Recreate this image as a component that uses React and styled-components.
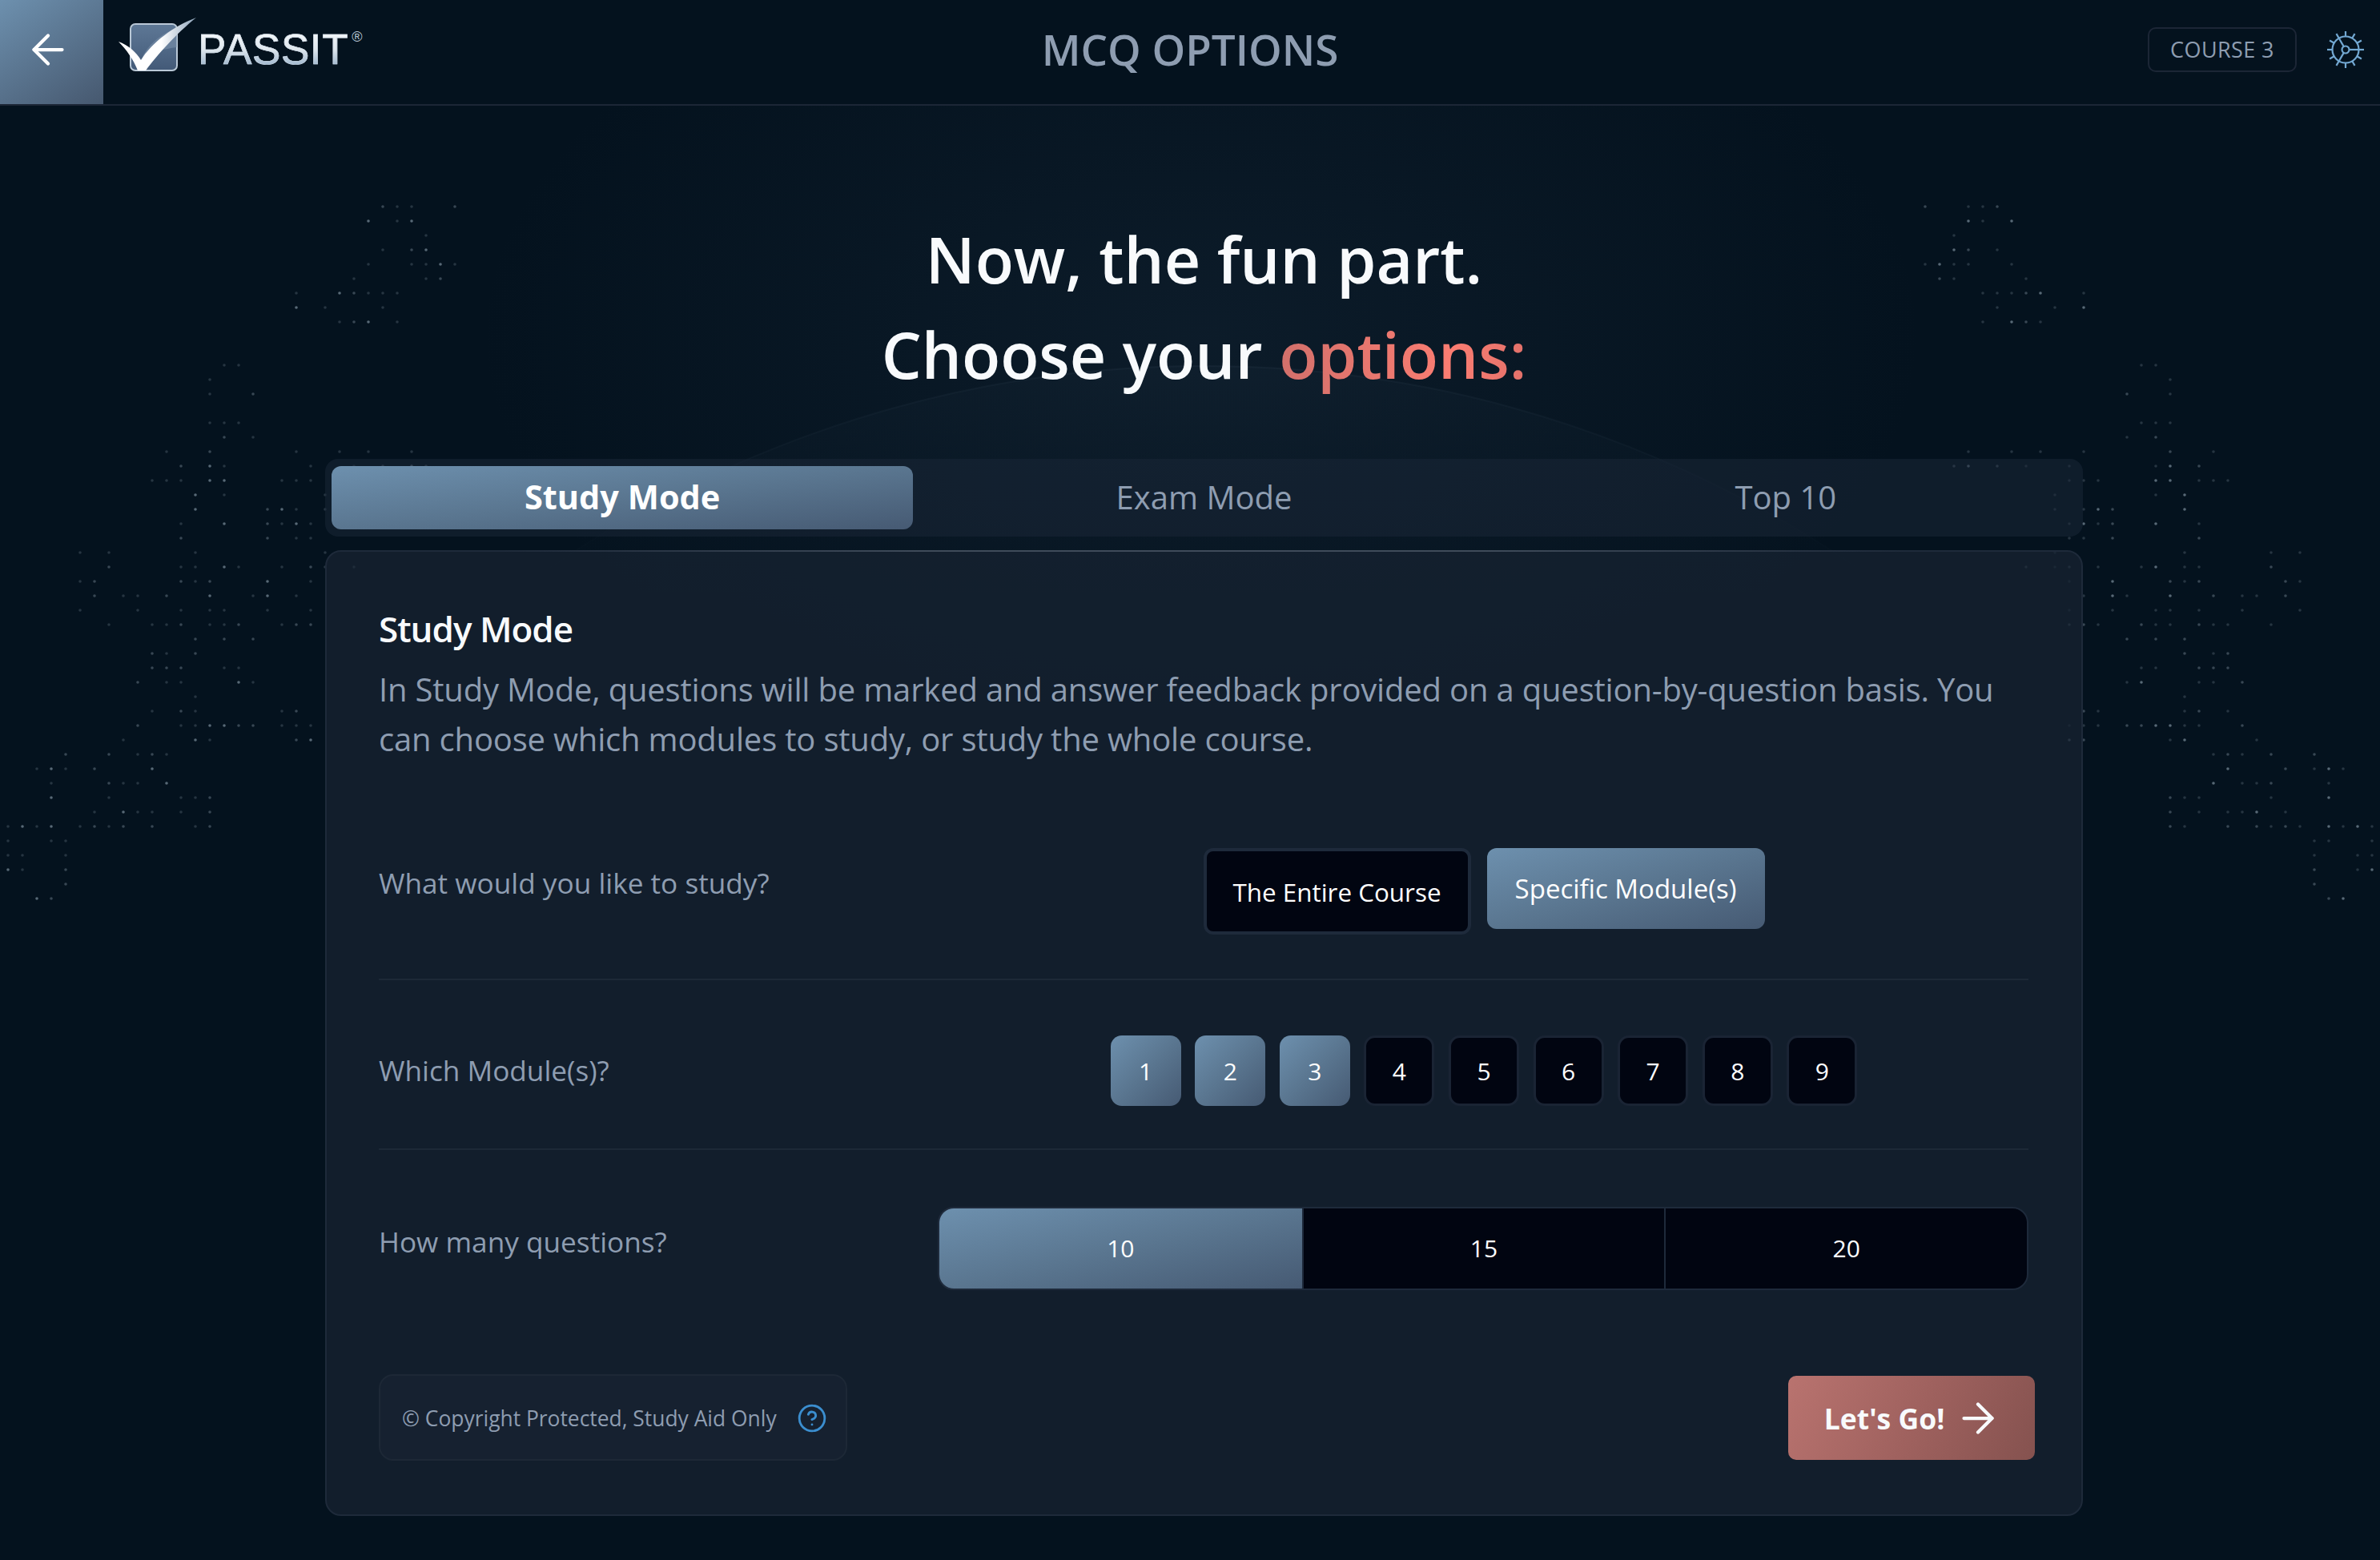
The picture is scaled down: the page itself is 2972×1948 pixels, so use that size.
import React from 'react';
import styled, { createGlobalStyle } from 'styled-components';
import { ArrowLeft, ArrowRight, CircleHelp } from 'lucide-react';

const GlobalStyle = createGlobalStyle`
  html, body { margin: 0; padding: 0; background: #04121e; }
  * { box-sizing: border-box; }
  body { font-family: "Open Sans", "Noto Sans", sans-serif; }
`;

const activeFill = 'linear-gradient(to bottom right, #6d90ae 0%, #5a7690 50%, #465a73 100%)';
const muted = '#8e9db1';

const Page = styled.div`
  position: relative;
  width: 2972px;
  height: 1948px;
  overflow: hidden;
  background: #04121e;
`;

const Glow = styled.div`
  position: absolute;
  inset: 0;
  background: radial-gradient(ellipse 900px 520px at 1500px 420px, rgba(38, 58, 78, 0.24), transparent 100%);
`;

const Streaks = styled.div`
  position: absolute;
  left: 500px;
  top: 132px;
  width: 2000px;
  height: 500px;
  background: repeating-linear-gradient(90deg, rgba(255, 255, 255, 0.005) 0 40px, transparent 40px 110px);
  mask-image: radial-gradient(ellipse at center, #000 30%, transparent 75%);
`;

const Backdrop = styled.svg`
  position: absolute;
  left: 0;
  top: 0;
`;

const Content = styled.div`
  position: relative;
`;

const Header = styled.header`
  display: grid;
  grid-template-columns: 1fr auto 1fr;
  align-items: center;
  height: 132px;
  border-bottom: 2px solid #1c2636;
  background: #04121e;
`;

const HeaderLeft = styled.div`
  display: flex;
  align-items: center;
  height: 130px;
`;

const BackButton = styled.button`
  display: flex;
  align-items: center;
  justify-content: center;
  width: 129px;
  height: 130px;
  padding: 0 9px 7px 0;
  border: 0;
  color: #fff;
  background: linear-gradient(145deg, #6d90ae 0%, #46586f 100%);
`;

const Logo = styled.div`
  display: flex;
  align-items: flex-start;
  height: 72px;
  margin-left: 17px;
  margin-top: -21px;
`;

const LogoWord = styled.span`
  margin-left: -1px;
  margin-top: 12px;
  font-family: "Liberation Sans", Arial, sans-serif;
  font-size: 53px;
  line-height: 61px;
  letter-spacing: 0.6px;
  background: linear-gradient(180deg, #f4f7fa 15%, #dfe7ee 50%, #93aec8 90%);
  -webkit-background-clip: text;
  background-clip: text;
  color: transparent;
  -webkit-text-stroke: 0.7px rgba(205, 218, 230, 0.8);
`;

const LogoMark = styled.sup`
  margin-left: 4px;
  margin-top: 17px;
  font-family: "Liberation Sans", Arial, sans-serif;
  font-size: 18px;
  line-height: 20px;
  color: #b5c4d2;
`;

const Title = styled.h1`
  margin: 0;
  padding-bottom: 7px;
  font-size: 53px;
  font-weight: 600;
  line-height: 70px;
  color: ${muted};
`;

const HeaderRight = styled.div`
  display: flex;
  align-items: center;
  justify-content: flex-end;
  gap: 37px;
  padding: 0 19px 7px 0;
`;

const CourseChip = styled.div`
  display: flex;
  align-items: center;
  justify-content: center;
  width: 186px;
  height: 56px;
  border: 2px solid #1c2636;
  border-radius: 10px;
  font-size: 27px;
  letter-spacing: 0.4px;
  color: ${muted};
`;

const Main = styled.main`
  width: 2195px;
  margin-left: 406px;
`;

const Heading = styled.h2`
  margin: 0;
  padding-top: 132px;
  padding-bottom: 71px;
  text-align: center;
  font-size: 79px;
  font-weight: 600;
  line-height: 119px;
  color: #f8fafc;
`;

const Accent = styled.span`
  background: linear-gradient(90deg, #d2706b 0%, #fb7d72 70%, #e2716a 100%);
  -webkit-background-clip: text;
  background-clip: text;
  color: transparent;
`;

const Tabs = styled.div`
  display: grid;
  grid-template-columns: repeat(3, 1fr);
  height: 97px;
  padding: 9px 8px;
  border-radius: 16px;
  background: rgba(26, 38, 54, 0.55);
`;

const Tab = styled.button`
  padding: 0 0 3px;
  border: 0;
  border-radius: 12px;
  font-family: inherit;
  font-size: ${(p) => (p.$active ? 41.5 : 40)}px;
  font-weight: ${(p) => (p.$active ? 700 : 500)};
  color: ${(p) => (p.$active ? '#fff' : muted)};
  background: ${(p) => (p.$active ? activeFill : 'transparent')};
`;

const Panel = styled.section`
  position: relative;
  height: 1206px;
  margin-top: 17px;
  padding: 66px 66px 0 65px;
  border: 2px solid #1e2a3a;
  border-radius: 20px;
  background: rgba(23, 35, 50, 0.75);

  &::before {
    content: "";
    position: absolute;
    top: -2px;
    left: 10%;
    right: 10%;
    height: 2px;
    background: linear-gradient(90deg, transparent, #3f4b5a 30%, #3f4b5a 70%, transparent);
  }
`;

const PanelTitle = styled.h3`
  margin: 0;
  font-size: 44px;
  font-weight: 600;
  letter-spacing: -1px;
  line-height: 60px;
  color: #f8fafc;
`;

const Description = styled.p`
  margin: 15px 0 0;
  font-size: 40px;
  letter-spacing: -0.185px;
  line-height: 62px;
  color: ${muted};
`;

const Row = styled.div`
  display: grid;
  grid-template-columns: 1fr 1362px;
  align-items: start;
  padding: ${(p) => p.$top}px 0 ${(p) => p.$bottom}px;
  border-bottom: ${(p) => (p.$last ? 'none' : '2px solid #1d2937')};
`;

const Label = styled.div`
  padding-top: 18px;
  font-size: 35.2px;
  line-height: 50px;
  color: ${muted};
`;

const Center = styled.div`
  display: flex;
  align-items: flex-start;
  justify-content: center;
  gap: ${(p) => p.$gap}px;
  padding-left: 2px;
`;

const ChoiceButton = styled.button`
  height: ${(p) => (p.$active ? 101 : 108)}px;
  width: ${(p) => (p.$active ? 347 : 334)}px;
  padding: 0;
  border: ${(p) => (p.$active ? 'none' : '4px solid #1e2a3b')};
  border-radius: 12px;
  font-family: inherit;
  font-size: ${(p) => (p.$active ? 33 : 31.4)}px;
  font-weight: 500;
  color: #fff;
  background: ${(p) => (p.$active ? activeFill : '#010511')};
`;

const ModuleButton = styled.button`
  width: 88px;
  height: 88px;
  padding: 0;
  border: ${(p) => (p.$active ? 'none' : '3px solid #1a2434')};
  border-radius: 14px;
  font-family: inherit;
  font-size: 30px;
  font-weight: 500;
  color: #fff;
  background: ${(p) => (p.$active ? activeFill : '#010511')};
`;

const Segments = styled.div`
  display: grid;
  grid-template-columns: repeat(3, 1fr);
  height: 104px;
  border: 2px solid #1e2a3b;
  border-radius: 20px;
  overflow: hidden;
  background: #010511;
`;

const Segment = styled.div`
  display: flex;
  align-items: center;
  justify-content: center;
  padding-bottom: 1px;
  font-size: 30px;
  font-weight: 500;
  color: #fff;
  background: ${(p) => (p.$active ? activeFill : 'transparent')};
  border-left: ${(p) => (p.$first ? 'none' : '2px solid #1e2a3b')};
`;

const Footer = styled.div`
  display: flex;
  align-items: flex-start;
  justify-content: space-between;
  margin-top: 105px;
  margin-right: -8px;
`;

const Notice = styled.div`
  display: flex;
  align-items: center;
  justify-content: space-between;
  width: 585px;
  height: 108px;
  padding: 2px 23px 0 27px;
  border: 2px solid #1d2836;
  border-radius: 18px;
  font-size: 26.4px;
  white-space: nowrap;
  color: ${muted};
  background: #162130;
`;

const GoButton = styled.button`
  display: flex;
  align-items: center;
  justify-content: center;
  gap: 12px;
  width: 308px;
  height: 105px;
  margin-top: 2px;
  padding: 0 0 0 4px;
  border: 0;
  border-radius: 10px;
  font-family: inherit;
  font-size: 35.5px;
  font-weight: 700;
  color: #f8fafc;
  background: linear-gradient(115deg, #b9736f 0%, #a0625f 50%, #85524f 100%);
`;

// dot map, one entry per row: columns lit on the 18px grid, mirrored to the other side
const DOT_ROWS = [
  [26, 27, 28, 31], [25, 27, 28], [29], [26, 28, 29], [25, 28, 29, 30, 31], [24, 29, 30],
  [20, 23, 24, 25, 26, 27], [20, 22, 26], [23, 24, 25, 27], [], [], [15, 16], [14], [14, 17], [],
  [14, 15, 16], [15, 17], [11, 14, 20, 23, 25, 28], [12, 14, 15, 21, 24, 26, 28, 29],
  [10, 11, 12, 14, 15, 19, 20, 21], [13, 15, 22], [13, 18, 19, 20, 22], [12, 15, 18, 19, 20, 21],
  [12, 18, 20, 21], [5, 7, 13, 22], [7, 12, 13, 15, 16, 19, 21, 22, 24], [5, 6, 12, 13, 14, 18, 21],
  [6, 8, 9, 11, 14, 17, 18, 20], [5, 9, 12, 14, 15, 18, 21], [7, 10, 11, 12, 14, 15, 16, 19, 20, 21],
  [13, 15, 17], [10, 11, 13], [10, 11, 12, 15, 16], [9, 11, 12, 16, 17], [13], [10, 12, 13, 19, 20],
  [9, 12, 13, 14, 15, 16, 17, 19, 20, 21], [8, 13, 14, 20, 21], [4, 7, 9, 10, 11], [2, 3, 4, 6, 10],
  [3, 7, 8, 9, 11], [3, 7, 12, 13, 14], [6, 8, 9, 10, 12, 14], [0, 1, 2, 3, 5, 6, 7, 8, 10, 13, 14],
  [0, 3, 4], [0, 1, 4], [0, 1, 4], [4], [2, 3],
];

const dotOpacity = (r, c) => {
  const n = (r * 37 + c * 61 + r * c * 13) % 17;
  if (n < 3) return 0.55;
  if (n < 8) return 0.34;
  return 0.22;
};

const BackgroundArt = () => (
  <Backdrop width="2972" height="1948" viewBox="0 0 2972 1948">
    <defs>
      <linearGradient id="domeFill" gradientUnits="userSpaceOnUse" x1="0" y1="457" x2="0" y2="760">
        <stop offset="0" stopColor="#7896b4" stopOpacity="0.03" />
        <stop offset="1" stopColor="#7896b4" stopOpacity="0" />
      </linearGradient>
      <linearGradient id="domeEdge" gradientUnits="userSpaceOnUse" x1="0" y1="457" x2="0" y2="720">
        <stop offset="0" stopColor="#96afc8" stopOpacity="0.05" />
        <stop offset="1" stopColor="#96afc8" stopOpacity="0" />
      </linearGradient>
    </defs>
    <circle cx="1503" cy="1907" r="1450" fill="url(#domeFill)" stroke="url(#domeEdge)" strokeWidth="2" />
    {DOT_ROWS.map((cols, r) =>
      cols.flatMap((c) => {
        const x = 10 + c * 18;
        const y = 258 + r * 18;
        const opacity = dotOpacity(r, c);
        return [
          <circle key={`l${r}-${c}`} cx={x} cy={y} r="1.8" fill="#9fb0bf" opacity={opacity} />,
          <circle key={`r${r}-${c}`} cx={2972 - x} cy={y} r="1.8" fill="#9fb0bf" opacity={opacity} />,
        ];
      })
    )}
  </Backdrop>
);

const LogoIcon = () => (
  <svg width="102" height="72" viewBox="146 20 102 72">
    <defs>
      <linearGradient id="boxFill" x1="0" y1="0" x2="0" y2="1">
        <stop offset="0" stopColor="#5e7896" />
        <stop offset="1" stopColor="#435a78" />
      </linearGradient>
      <linearGradient id="checkFill" x1="0" y1="0" x2="1" y2="0">
        <stop offset="0" stopColor="#ffffff" />
        <stop offset="0.55" stopColor="#ffffff" />
        <stop offset="1" stopColor="#8ea4bb" />
      </linearGradient>
    </defs>
    <rect x="163" y="31" width="58" height="58" rx="6" fill="url(#boxFill)" stroke="#b9c8d6" strokeWidth="2" />
    <path d="M178 72C188 52 205 42 221 36L221 60C205 62 190 66 178 72Z" fill="#7d94ad" opacity="0.55" />
    <path d="M148 53C160 57 170 66 176 76C190 54 216 34 245 23C220 43 196 70 182 89L172 89C167 76 158 63 148 53Z" fill="url(#checkFill)" />
  </svg>
);

const GearIcon = () => (
  <svg width="48" height="48" viewBox="-24 -24 48 48" fill="none" stroke="#73a8d2" strokeWidth="2.2">
    <circle r="16.5" />
    <circle r="4.5" />
    {[0, 120, 240].map((a) => (
      <line key={a} x1="4.5" x2="16.5" transform={`rotate(${a})`} />
    ))}
    {Array.from({ length: 12 }).map((_, i) => (
      <line key={i} x1="16.5" x2="23" transform={`rotate(${i * 30})`} />
    ))}
  </svg>
);

export default function App() {
  const modules = [1, 2, 3, 4, 5, 6, 7, 8, 9];

  return (
    <Page>
      <GlobalStyle />
      <Glow />
      <Streaks />
      <BackgroundArt />
      <Content>
        <Header>
          <HeaderLeft>
            <BackButton>
              <ArrowLeft size={60} strokeWidth={1.7} />
            </BackButton>
            <Logo>
              <LogoIcon />
              <LogoWord>PASSIT</LogoWord>
              <LogoMark>®</LogoMark>
            </Logo>
          </HeaderLeft>
          <Title>MCQ OPTIONS</Title>
          <HeaderRight>
            <CourseChip>COURSE 3</CourseChip>
            <GearIcon />
          </HeaderRight>
        </Header>

        <Main>
          <Heading>
            Now, the fun part.
            <br />
            Choose your <Accent>options:</Accent>
          </Heading>

          <Tabs>
            <Tab $active>Study Mode</Tab>
            <Tab>Exam Mode</Tab>
            <Tab>Top 10</Tab>
          </Tabs>

          <Panel>
            <PanelTitle>Study Mode</PanelTitle>
            <Description>
              In Study Mode, questions will be marked and answer feedback provided on a question-by-question basis. You
              can choose which modules to study, or study the whole course.
            </Description>

            <Row $top={105} $bottom={55}>
              <Label>What would you like to study?</Label>
              <Center $gap={20}>
                <ChoiceButton>The Entire Course</ChoiceButton>
                <ChoiceButton $active>Specific Module(s)</ChoiceButton>
              </Center>
            </Row>

            <Row $top={69} $bottom={53}>
              <Label>Which Module(s)?</Label>
              <Center $gap={17.6}>
                {modules.map((m) => (
                  <ModuleButton key={m} $active={m <= 3}>
                    {m}
                  </ModuleButton>
                ))}
              </Center>
            </Row>

            <Row $top={71} $bottom={0} $last>
              <Label>How many questions?</Label>
              <Segments>
                <Segment $active $first>10</Segment>
                <Segment>15</Segment>
                <Segment>20</Segment>
              </Segments>
            </Row>

            <Footer>
              <Notice>
                © Copyright Protected, Study Aid Only
                <CircleHelp size={38} color="#3b8ecf" strokeWidth={1.8} />
              </Notice>
              <GoButton>
                Let's Go!
                <ArrowRight size={60} strokeWidth={1.7} />
              </GoButton>
            </Footer>
          </Panel>
        </Main>
      </Content>
    </Page>
  );
}
